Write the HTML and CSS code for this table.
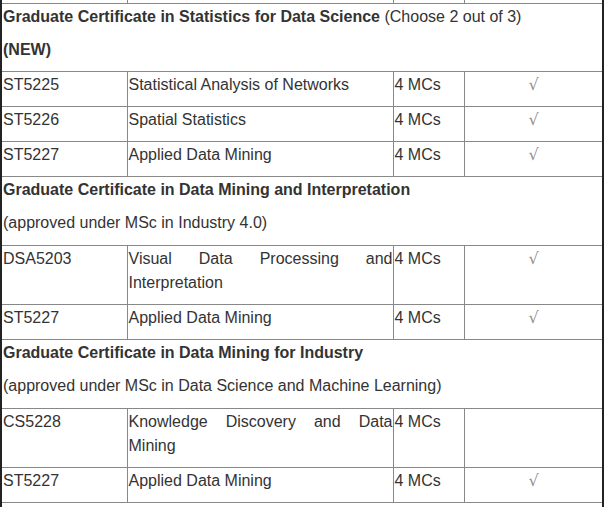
FILE: index.html
```html
<!DOCTYPE html>
<html lang="en">
<head>
<meta charset="utf-8">
<title>Graduate Certificates</title>
<link rel="stylesheet" href="styles.css">
</head>
<body>
<div class="frame">
  <table class="modules">
    <colgroup>
      <col class="c-code">
      <col class="c-title">
      <col class="c-mc">
      <col class="c-check">
    </colgroup>
    <tbody>
      <tr class="spacer"><td></td><td></td><td></td><td></td></tr>
      <tr class="section">
        <td colspan="4">
          <p><strong>Graduate Certificate in Statistics for Data Science</strong> (Choose 2 out of 3)</p>
          <p><strong>(NEW)</strong></p>
        </td>
      </tr>
      <tr>
        <td><p>ST5225</p></td>
        <td class="title"><p>Statistical Analysis of Networks</p></td>
        <td><p>4 MCs</p></td>
        <td class="check"><p>√</p></td>
      </tr>
      <tr>
        <td><p>ST5226</p></td>
        <td class="title"><p>Spatial Statistics</p></td>
        <td><p>4 MCs</p></td>
        <td class="check"><p>√</p></td>
      </tr>
      <tr>
        <td><p>ST5227</p></td>
        <td class="title"><p>Applied Data Mining</p></td>
        <td><p>4 MCs</p></td>
        <td class="check"><p>√</p></td>
      </tr>
      <tr class="section section-tall">
        <td colspan="4">
          <p><strong>Graduate Certificate in Data Mining and Interpretation</strong></p>
          <p>(approved under MSc in Industry 4.0)</p>
        </td>
      </tr>
      <tr>
        <td><p>DSA5203</p></td>
        <td class="title"><p>Visual Data Processing and Interpretation</p></td>
        <td><p>4 MCs</p></td>
        <td class="check"><p>√</p></td>
      </tr>
      <tr>
        <td><p>ST5227</p></td>
        <td class="title"><p>Applied Data Mining</p></td>
        <td><p>4 MCs</p></td>
        <td class="check"><p>√</p></td>
      </tr>
      <tr class="section section-tall">
        <td colspan="4">
          <p><strong>Graduate Certificate in Data Mining for Industry</strong></p>
          <p>(approved under MSc in Data Science and Machine Learning)</p>
        </td>
      </tr>
      <tr>
        <td><p>CS5228</p></td>
        <td class="title"><p>Knowledge Discovery and Data Mining</p></td>
        <td><p>4 MCs</p></td>
        <td class="check"><p></p></td>
      </tr>
      <tr>
        <td><p>ST5227</p></td>
        <td class="title"><p>Applied Data Mining</p></td>
        <td><p>4 MCs</p></td>
        <td class="check"><p>√</p></td>
      </tr>
      <tr class="section">
        <td colspan="4"><p>&nbsp;</p></td>
      </tr>
    </tbody>
  </table>
</div>
</body>
</html>
```

FILE: styles.css
```css
html, body {
  margin: 0;
  padding: 0;
  background: #ffffff;
}

body {
  font-family: "Liberation Sans", Arial, sans-serif;
  font-size: 16px;
  line-height: 24px;
  color: #333333;
}

.frame {
  width: 600px;
  height: 507px;
  overflow: hidden;
  border-left: 2px solid #222222;
  border-right: 2px solid #222222;
}

.modules {
  width: 600px;
  table-layout: fixed;
  border-collapse: collapse;
}

.c-code { width: 125px; }
.c-title { width: 266px; }
.c-mc { width: 71px; }
.c-check { width: 138px; }

.modules td {
  border: 1px solid #888888;
  padding: 1px 0 0 1px;
  vertical-align: top;
}

.modules td:first-child {
  border-left: none;
}

.modules p {
  margin: 0 0 9px;
}

.modules .spacer td {
  height: 3px;
  border-top: none;
  padding: 0;
}

.modules .section-tall p:last-child {
  margin-bottom: 10px;
}

.modules .title {
  text-align: justify;
}

.modules .check {
  text-align: center;
  color: #8c8c8c;
  font-family: "DejaVu Sans", sans-serif;
  font-size: 16px;
}
```
